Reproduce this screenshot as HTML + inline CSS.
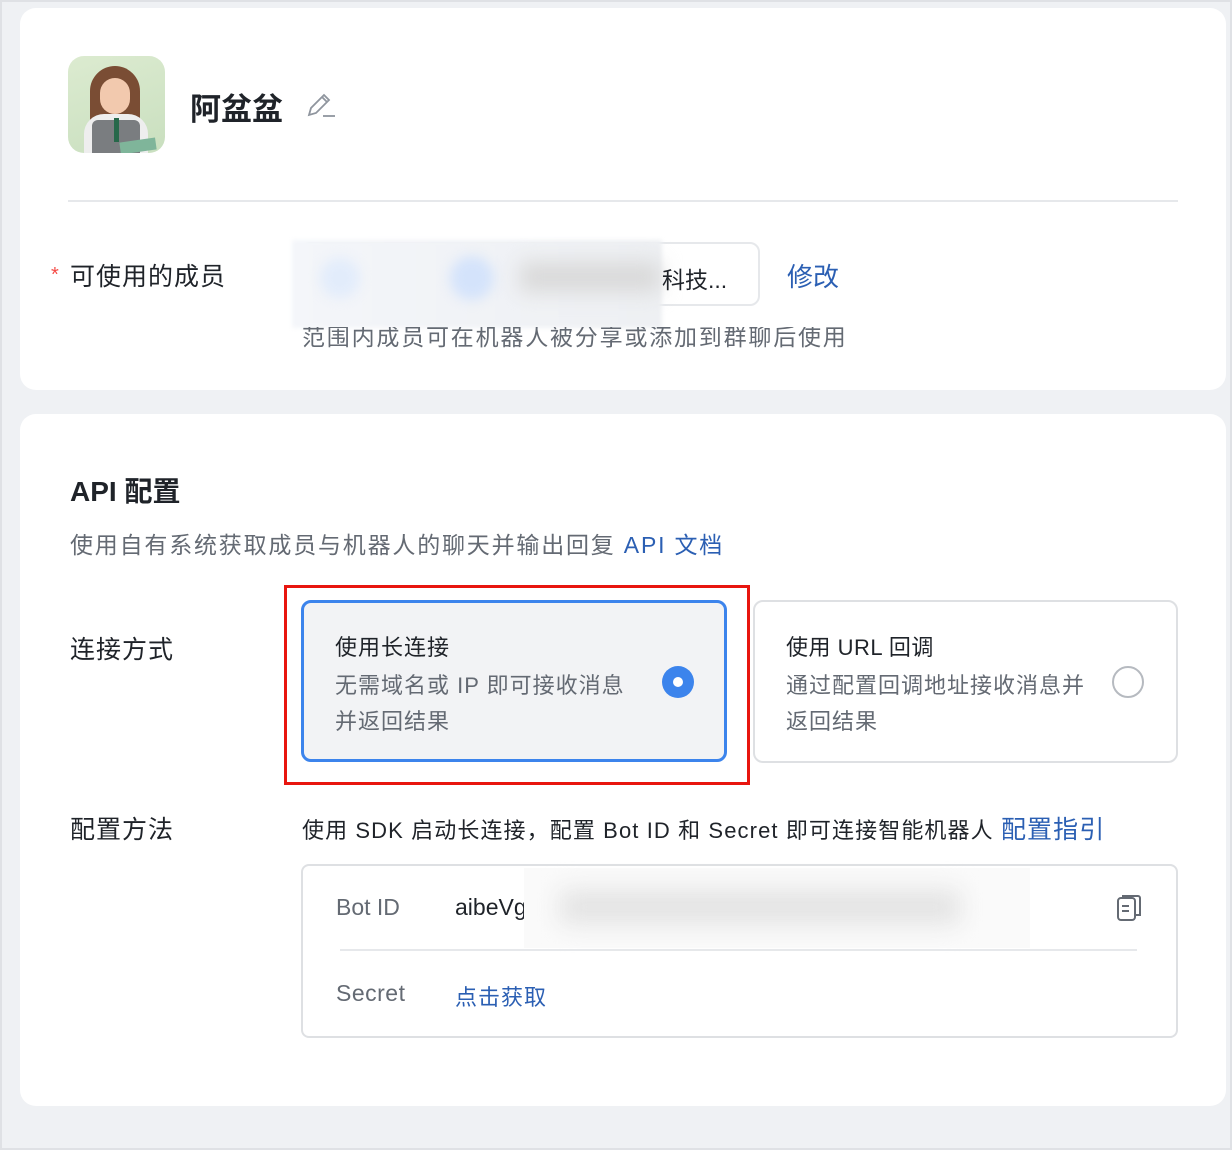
<!DOCTYPE html>
<html><head><meta charset="utf-8"><style>
*{margin:0;padding:0;box-sizing:border-box}
body{width:1232px;height:1150px;background:#eff1f4;font-family:"Liberation Sans","Noto Sans CJK SC",sans-serif;position:relative;overflow:hidden;color:#1f2329}
.a{position:absolute;white-space:nowrap}
.card{position:absolute;background:#fff;border-radius:16px}
.g{color:#646a73}.b{color:#2b5fb3}
</style></head><body>
<div class="a" style="left:0;top:0;width:1232px;height:1150px;border:2px solid #dfe1e5"></div>
<div class="card" style="left:20px;top:8px;width:1206px;height:382px"></div>
<div class="card" style="left:20px;top:414px;width:1206px;height:692px"></div>
<div class="a" style="left:68px;top:56px;width:97px;height:97px;border-radius:16px;background:linear-gradient(160deg,#dcebd0,#c9dfbf);overflow:hidden">
<div style="position:absolute;left:22px;top:10px;width:50px;height:70px;border-radius:25px 25px 10px 10px;background:#7a4d34"></div>
<div style="position:absolute;left:32px;top:22px;width:30px;height:36px;border-radius:15px;background:#f2c9ae"></div>
<div style="position:absolute;left:16px;top:58px;width:64px;height:45px;border-radius:20px 20px 0 0;background:#eee"></div>
<div style="position:absolute;left:24px;top:64px;width:48px;height:40px;background:#7a7d80;border-radius:6px"></div>
<div style="position:absolute;left:46px;top:62px;width:5px;height:24px;background:#27684a"></div>
<div style="position:absolute;left:52px;top:84px;width:36px;height:12px;background:#7fb59a;transform:rotate(-8deg)"></div>
</div>
<div class="a" style="left:190px;top:84px;font-size:31px;font-weight:bold">阿盆盆</div>
<svg class="a" style="left:305px;top:90px" width="32" height="30" viewBox="0 0 32 30"><path d="M4 25 L6 18 L19 5 L24 10 L11 23 Z M17 7 L22 12" fill="none" stroke="#8f959e" stroke-width="1.8"/><path d="M18 26 H30" stroke="#8f959e" stroke-width="1.8"/></svg>
<div class="a" style="left:68px;top:200px;width:1110px;height:2px;background:#e6e8eb"></div>
<div class="a" style="left:51px;top:264px;font-size:20px;color:#f54a45">*</div>
<div class="a" style="left:70px;top:257px;font-size:25px;letter-spacing:1px">可使用的成员</div>
<div class="a" style="left:300px;top:242px;width:460px;height:64px;border:2px solid #e6e8eb;border-radius:10px;background:#fff"></div>
<div class="a" style="left:292px;top:240px;width:370px;height:88px;background:linear-gradient(90deg,#f4f6fa,#eef0f3);filter:blur(2px)"></div>
<div class="a" style="left:320px;top:258px;width:40px;height:40px;border-radius:50%;background:#e2ecfb;filter:blur(6px)"></div>
<div class="a" style="left:450px;top:256px;width:44px;height:44px;border-radius:50%;background:#d4e3fb;filter:blur(6px)"></div>
<div class="a" style="left:520px;top:262px;width:140px;height:30px;background:#d9d9d9;filter:blur(10px)"></div>
<div class="a" style="left:662px;top:261px;font-size:23px">科技...</div>
<div class="a b" style="left:787px;top:257px;font-size:26px">修改</div>
<div class="a g" style="left:302px;top:318px;font-size:23px;letter-spacing:1.8px;clip-path:inset(9px 0 0 0)">范围内成员可在机器人被分享或添加到群聊后使用</div>
<div class="a" style="left:70px;top:470px;font-size:28px;font-weight:bold">API 配置</div>
<div class="a g" style="left:70px;top:526px;font-size:23px;letter-spacing:1.8px">使用自有系统获取成员与机器人的聊天并输出回复 <span class="b">API 文档</span></div>
<div class="a" style="left:70px;top:630px;font-size:25px;letter-spacing:1px">连接方式</div>
<div class="a" style="left:284px;top:585px;width:466px;height:200px;border:3px solid #e8150f"></div>
<div class="a" style="left:301px;top:600px;width:426px;height:162px;border:3px solid #3c84ec;border-radius:10px;background:#f2f3f5"></div>
<div class="a" style="left:335px;top:630px;font-size:22px;letter-spacing:1px">使用长连接</div>
<div class="a g" style="left:335px;top:668px;font-size:22px;line-height:36px;letter-spacing:1px">无需域名或 IP 即可接收消息<br>并返回结果</div>
<div class="a" style="left:662px;top:666px;width:32px;height:32px;border-radius:50%;background:#3c84ec"><div style="position:absolute;left:11px;top:11px;width:10px;height:10px;border-radius:50%;background:#fff"></div></div>
<div class="a" style="left:753px;top:600px;width:425px;height:163px;border:2px solid #dee0e3;border-radius:10px"></div>
<div class="a" style="left:786px;top:630px;font-size:22px;letter-spacing:0.5px">使用 URL 回调</div>
<div class="a g" style="left:786px;top:668px;font-size:22px;line-height:36px;letter-spacing:1px">通过配置回调地址接收消息并<br>返回结果</div>
<div class="a" style="left:1112px;top:666px;width:32px;height:32px;border-radius:50%;border:2px solid #b6bac0"></div>
<div class="a" style="left:70px;top:810px;font-size:25px;letter-spacing:1px">配置方法</div>
<div class="a" style="left:302px;top:810px;font-size:22px;letter-spacing:1.1px">使用 SDK 启动长连接，配置 Bot ID 和 Secret 即可连接智能机器人 <span class="b" style="font-size:25px">配置指引</span></div>
<div class="a" style="left:301px;top:864px;width:877px;height:174px;border:2px solid #dee0e3;border-radius:8px"></div>
<div class="a g" style="left:336px;top:894px;font-size:23px">Bot ID</div>
<div class="a" style="left:455px;top:894px;font-size:23px">aibeVg</div>
<div class="a" style="left:340px;top:949px;width:797px;height:2px;background:#e6e8eb"></div>
<div class="a" style="left:524px;top:868px;width:506px;height:80px;background:#fafafa"></div>
<div class="a" style="left:560px;top:890px;width:400px;height:34px;background:#e3e3e3;filter:blur(12px)"></div>
<svg class="a" style="left:1116px;top:893px" width="26" height="30" viewBox="0 0 26 30"><rect x="2" y="5" width="17" height="22" rx="3" fill="none" stroke="#646a73" stroke-width="2"/><path d="M7 5 V3 H22 a2 2 0 0 1 2 2 V22 H19" fill="none" stroke="#646a73" stroke-width="2"/><path d="M6 13 H13 M6 18 H13" stroke="#646a73" stroke-width="2"/></svg>
<div class="a g" style="left:336px;top:980px;font-size:23px;letter-spacing:0.5px">Secret</div>
<div class="a b" style="left:455px;top:980px;font-size:22px;letter-spacing:1px">点击获取</div>
</body></html>
